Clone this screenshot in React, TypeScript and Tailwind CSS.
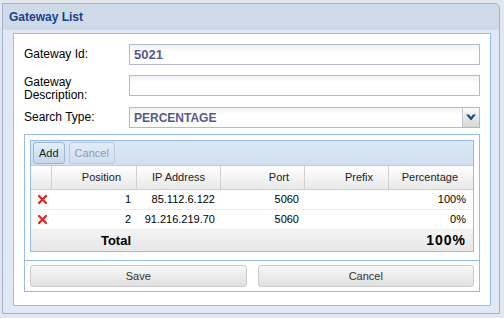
import React from 'react';

const font = { fontFamily: '"Liberation Sans", Arial, sans-serif' };

function RedX() {
  return (
    <svg width="9" height="9" viewBox="0 0 9 9">
      <path d="M1 1 L8 8 M8 1 L1 8" stroke="#e0261c" strokeWidth="2.2" strokeLinecap="square" />
    </svg>
  );
}

const cols = ['w-[21px]', 'w-[85px]', 'w-[84px]', 'w-[84px]', 'w-[84px]', 'flex-1'];

const rows = [
  { pos: '1', ip: '85.112.6.122', port: '5060', pct: '100%' },
  { pos: '2', ip: '91.216.219.70', port: '5060', pct: '0%' },
];

export default function App() {
  return (
    <div className="w-[504px] h-[318px] bg-[#e3e6ea] pt-[3px] pl-[2px] overflow-hidden" style={font}>
      <div className="w-[498px] h-[311px] border border-[#9fb3cf] rounded-tr-[5px] bg-[#cedae8] flex flex-col">
        {/* Title */}
        <div className="h-[26px] pl-[6px] flex items-center text-[12px] font-bold text-[#15428b]">
          Gateway List
        </div>

        {/* Body */}
        <div className="flex-1 bg-[#dfe8f6] pt-[3px] pl-[10px] pr-[8px] pb-[7px] flex">
          <div className="flex-1 bg-white border border-[#99bbe8] pt-[10px] px-[10px] pb-[10px] flex flex-col">
            {/* Gateway Id */}
            <div className="flex items-start">
              <div className="w-[105px] pt-[4px] text-[12px] leading-[13px] text-black">Gateway Id:</div>
              <div className="flex-1 h-[21px] border border-[#b5b8c8] bg-gradient-to-b from-[#f3f3f3] to-white to-[40%] pl-[4px] flex items-center text-[13px] font-bold text-[#58588c]">
                5021
              </div>
            </div>

            {/* Description */}
            <div className="flex items-start mt-[10px]">
              <div className="w-[105px] h-[21px] pt-[1px] text-[12px] leading-[13px] text-black">
                Gateway
                <br />
                Description:
              </div>
              <div className="flex-1 h-[21px] border border-[#b5b8c8] bg-gradient-to-b from-[#f3f3f3] to-white to-[40%]" />
            </div>

            {/* Search type */}
            <div className="flex items-start mt-[11px]">
              <div className="w-[105px] pt-[4px] text-[12px] leading-[13px] text-black">Search Type:</div>
              <div className="flex-1 h-[21px] border border-[#b5b8c8] bg-gradient-to-b from-[#f3f3f3] to-white to-[40%] flex">
                <div className="flex-1 pl-[4px] flex items-center text-[12px] font-bold text-[#58588c]">PERCENTAGE</div>
                <div className="w-[17px] border-l border-[#c4c6cf] bg-gradient-to-b from-[#fbfbfb] to-[#d6d6d6] flex items-center justify-center">
                  <svg width="10" height="7" viewBox="0 0 10 7">
                    <path d="M0 0.5 L3 0.5 L5 3 L7 0.5 L10 0.5 L5 6.5 Z" fill="#1f4a86" />
                  </svg>
                </div>
              </div>
            </div>

            {/* Grid box */}
            <div className="mt-[6px] border border-[#99bbe8] flex flex-col">
              <div className="pt-[5px] px-[5px] pb-[8px]">
                <div className="border border-[#99bbe8]">
                  {/* Toolbar */}
                  <div className="h-[25px] bg-gradient-to-b from-[#dde8f5] to-[#d0dff1] flex items-center pl-[2px] gap-[4px] border-b border-[#b6cbe6]">
                    <div className="h-[22px] px-[5px] rounded-[3px] border border-[#9fb7d4] bg-gradient-to-b from-[#e4eefa] to-[#c4d6ee] flex items-center text-[11px] text-[#222]">
                      Add
                    </div>
                    <div className="h-[22px] px-[5px] rounded-[3px] border border-[#b6cae2] bg-gradient-to-b from-[#e2ecf8] to-[#cfddef] flex items-center text-[11px] text-[#8e9bab]">
                      Cancel
                    </div>
                  </div>

                  {/* Header */}
                  <div className="h-[24px] flex bg-gradient-to-b from-white to-[#e8e8e8] border-b border-[#d0d0d0] text-[11px] text-[#222]">
                    {['', 'Position', 'IP Address', 'Port', 'Prefix', 'Percentage'].map((h, i) => (
                      <div
                        key={i}
                        className={`${cols[i]} ${i < 5 ? 'border-r border-[#d0d0d0]' : ''} flex items-center justify-end pr-[15px]`}
                      >
                        {h}
                      </div>
                    ))}
                  </div>

                  {/* Rows */}
                  {rows.map((r, idx) => (
                    <div key={idx} className="h-[20px] flex border-b border-[#ededed] text-[11px] text-black">
                      <div className={`${cols[0]} flex items-center justify-center pl-[2px]`}>
                        <RedX />
                      </div>
                      <div className={`${cols[1]} flex items-center justify-end pr-[6px]`}>{r.pos}</div>
                      <div className={`${cols[2]} flex items-center justify-end pr-[6px]`}>{r.ip}</div>
                      <div className={`${cols[3]} flex items-center justify-end pr-[6px]`}>{r.port}</div>
                      <div className={`${cols[4]}`} />
                      <div className={`${cols[5]} flex items-center justify-end pr-[7px]`}>{r.pct}</div>
                    </div>
                  ))}

                  {/* Total */}
                  <div className="h-[21px] flex bg-gradient-to-b from-[#f4f4f4] to-[#e6e6e6] font-bold text-black">
                    <div className={cols[0]} />
                    <div className={`${cols[1]} flex items-center justify-end pr-[6px] text-[13px]`}>Total</div>
                    <div className={cols[2]} />
                    <div className={cols[3]} />
                    <div className={cols[4]} />
                    <div className={`${cols[5]} flex items-center justify-end pr-[7px] text-[14px] tracking-[1px]`}>100%</div>
                  </div>
                </div>
              </div>

              {/* Buttons */}
              <div className="border-t border-[#99bbe8] px-[5px] py-[4px] flex gap-[11px]">
                <div className="flex-1 h-[22px] rounded-[3px] border border-[#cbcbcb] bg-gradient-to-b from-[#f7f7f7] to-[#e0e0e0] flex items-center justify-center text-[11px] text-[#333]">
                  Save
                </div>
                <div className="flex-1 h-[22px] rounded-[3px] border border-[#cbcbcb] bg-gradient-to-b from-[#f7f7f7] to-[#e0e0e0] flex items-center justify-center text-[11px] text-[#333]">
                  Cancel
                </div>
              </div>
            </div>
          </div>
        </div>
      </div>
    </div>
  );
}
